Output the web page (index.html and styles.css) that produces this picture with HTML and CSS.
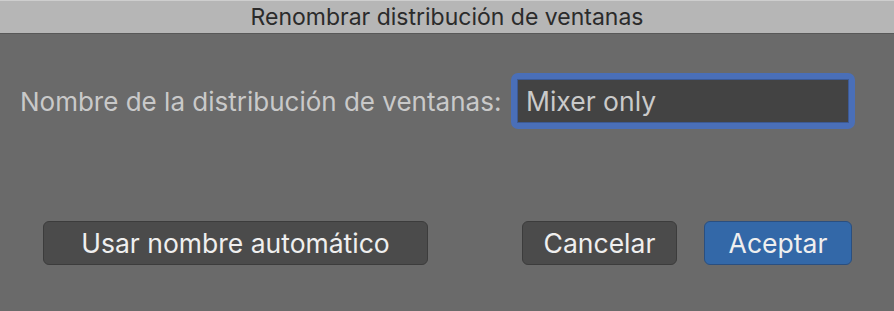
FILE: index.html
```html
<!DOCTYPE html>
<html lang="es">
<head>
    <meta charset="UTF-8">
    <meta name="viewport" content="width=device-width, initial-scale=1.0">
    <title>Renombrar distribución de ventanas</title>
    <link rel="stylesheet" href="styles.css">
</head>
<body>

    <div class="window">
        <div class="titlebar">Renombrar distribución de ventanas</div>

        <div class="content">
            <div class="field-row">
                <label class="field-label" for="nombre">Nombre de la distribución de ventanas:</label>
                <div class="focus-ring">
                    <input type="text" id="nombre" class="field" value="Mixer only">
                </div>
            </div>

            <div class="button-row">
                <button class="btn btn-wide">Usar nombre automático</button>
                <div class="actions">
                    <button class="btn btn-cancel">Cancelar</button>
                    <button class="btn btn-default">Aceptar</button>
                </div>
            </div>
        </div>
    </div>

</body>
</html>
```

FILE: styles.css
```css
body {
    margin: 0;
    padding: 0;
    background-color: #6a6a6a;
    font-family: Inter, "Noto Sans", sans-serif;
}

.window {
    width: 894px;
    height: 311px;
    display: flex;
    flex-direction: column;
    background-color: #6a6a6a;
}

.titlebar {
    height: 34px;
    line-height: 32px;
    text-align: center;
    font-size: 23px;
    color: #2b2b2b;
    background-color: #b6b6b6;
    border-top: 1px solid #cecece;
    border-bottom: 1px solid #585858;
    box-sizing: border-box;
}

.content {
    flex: 1;
    display: flex;
    flex-direction: column;
}

.field-row {
    display: flex;
    align-items: center;
    justify-content: space-between;
    padding: 39px 39px 0 20px;
}

.field-label {
    font-size: 26px;
    color: #c9c9c9;
}

.focus-ring {
    background-color: #4a6fb8;
    padding: 6px;
    border-radius: 7px;
}

.field {
    display: block;
    width: 332px;
    height: 44px;
    box-sizing: border-box;
    border: 1px solid #3d5a94;
    background-color: #434343;
    color: #cacaca;
    font-family: inherit;
    font-size: 26.5px;
    padding: 0 8px;
    outline: none;
}

.button-row {
    display: flex;
    justify-content: space-between;
    padding: 92px 42px 0 43px;
}

.actions {
    display: flex;
    gap: 27px;
}

.btn {
    height: 44px;
    box-sizing: border-box;
    border-radius: 6px;
    border: 1px solid #3c3c3c;
    background-color: #4b4b4b;
    color: #efefef;
    font-family: inherit;
    font-size: 26.5px;
    padding: 0;
}

.btn-wide {
    width: 385px;
}

.btn-cancel {
    width: 155px;
}

.btn-default {
    width: 148px;
    background-color: #3368a8;
    border-color: #2a4f80;
}
```
